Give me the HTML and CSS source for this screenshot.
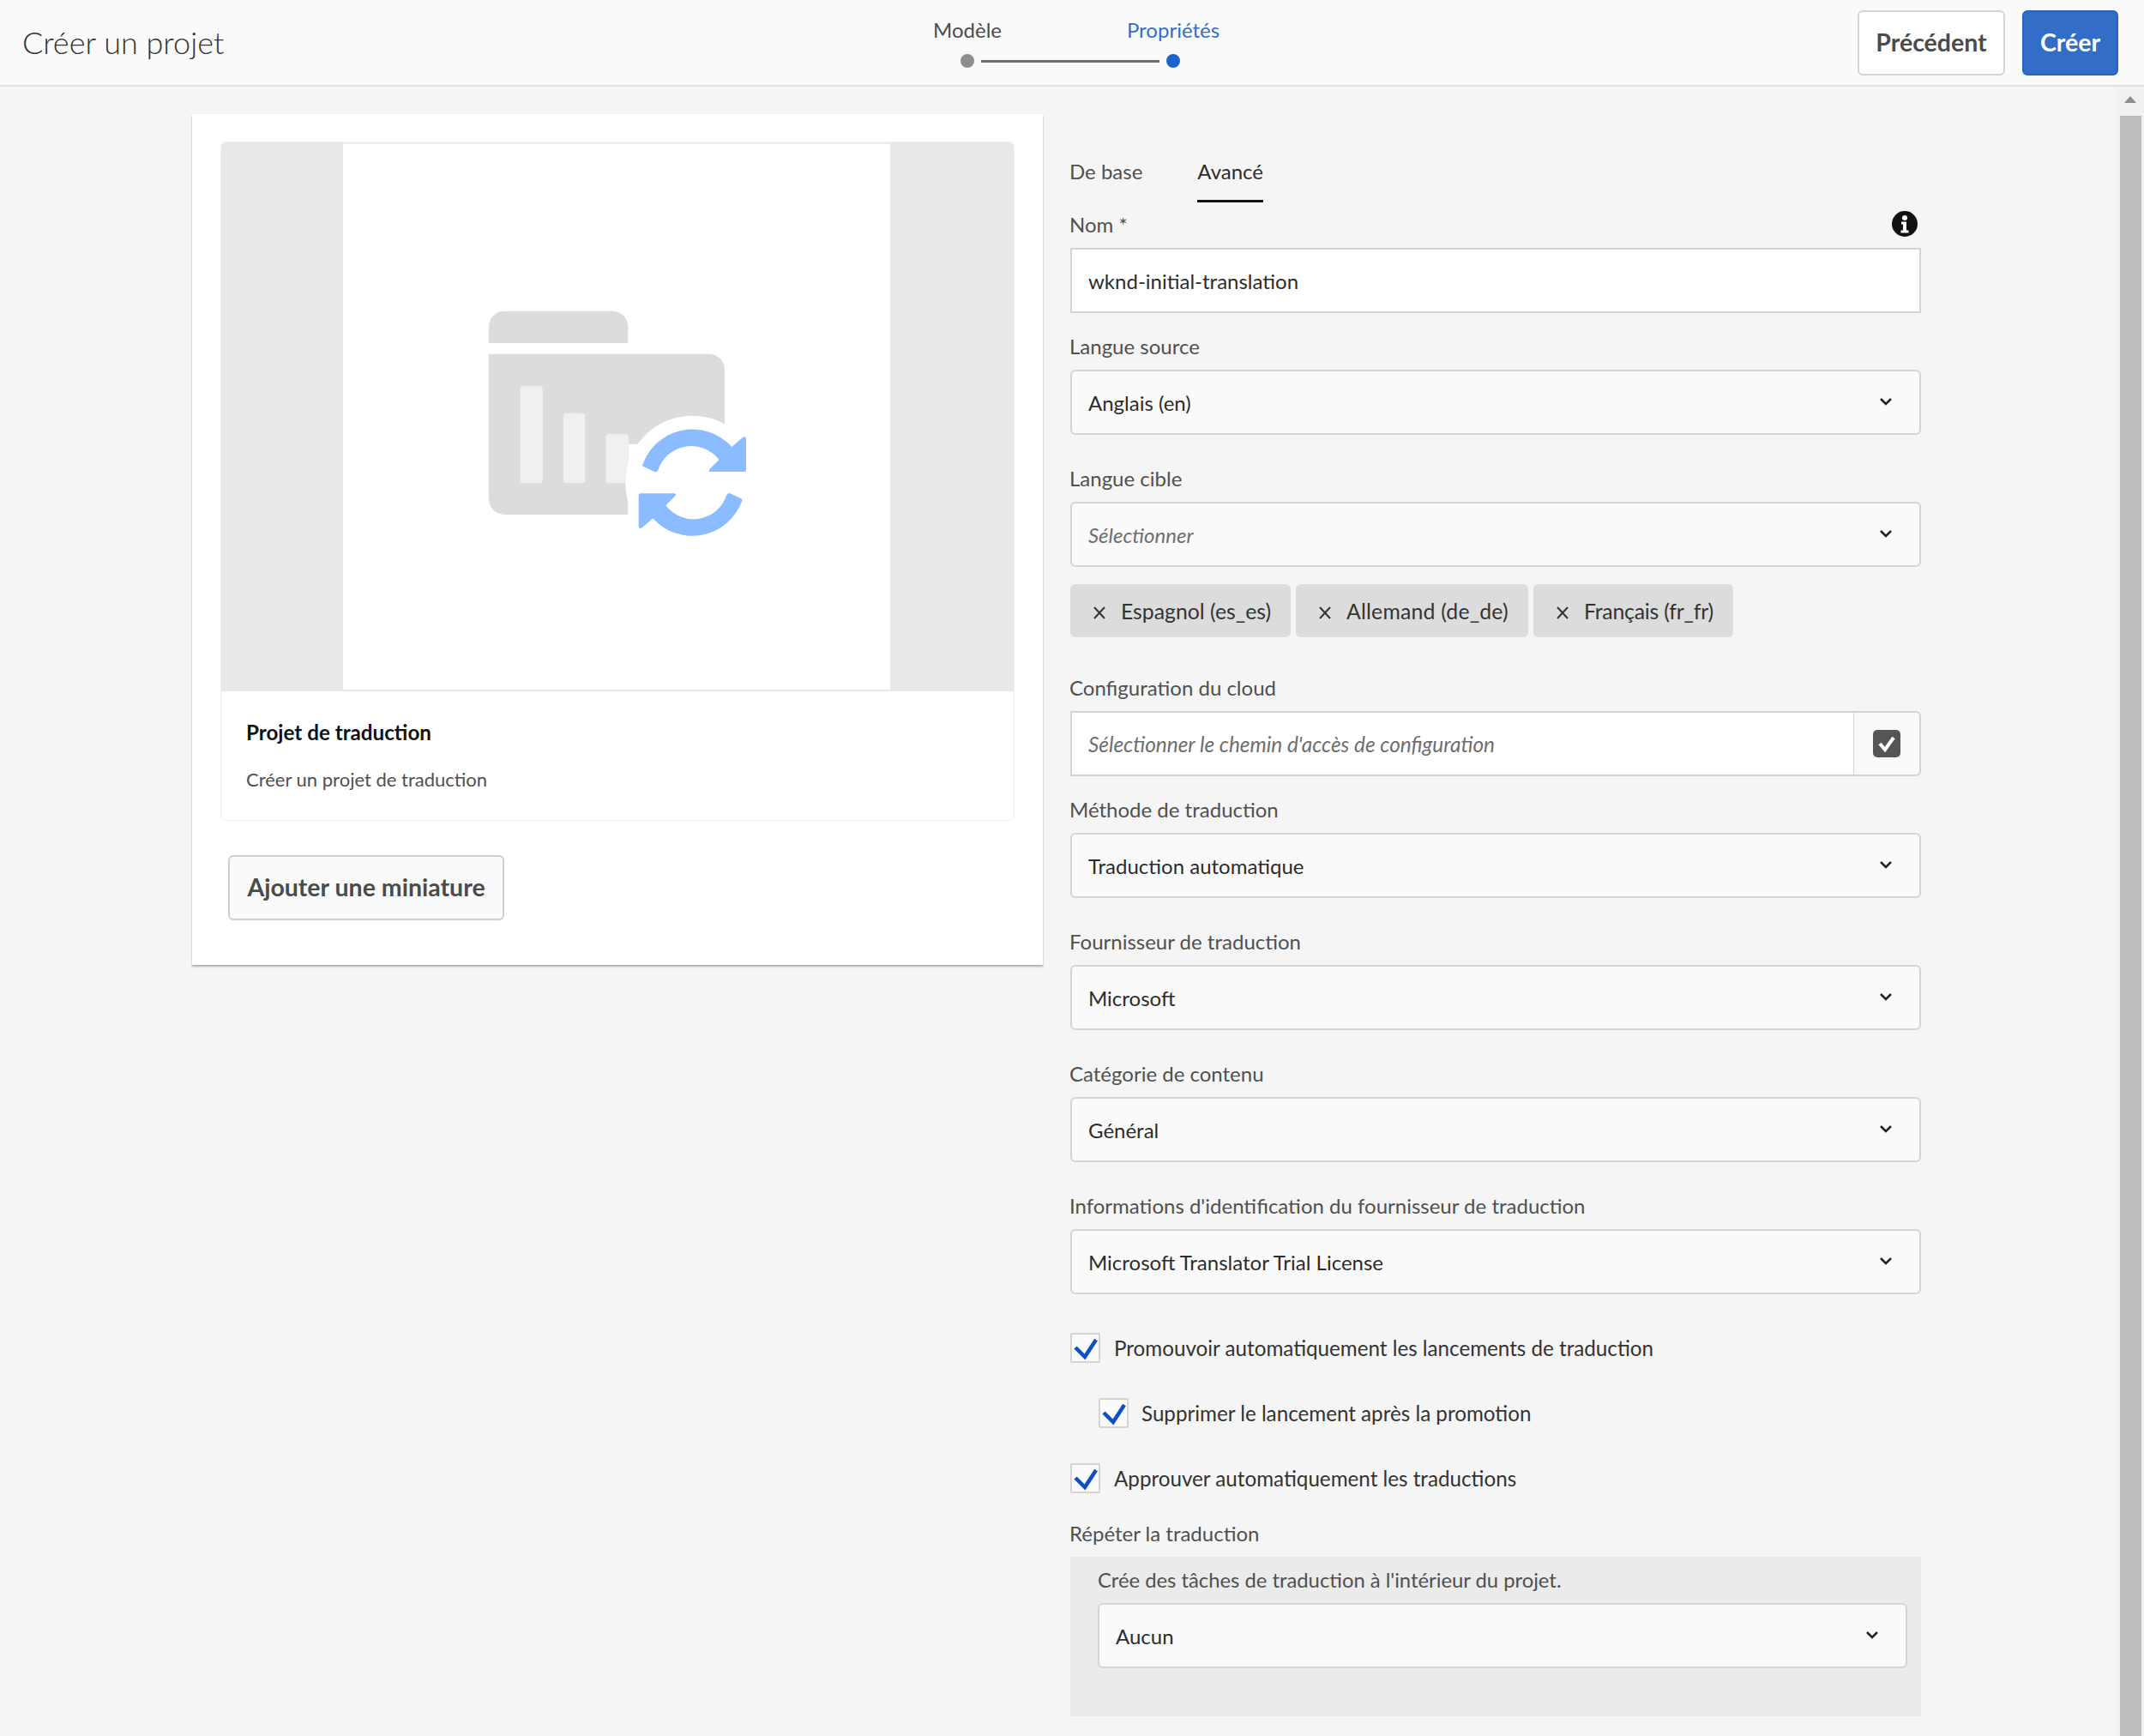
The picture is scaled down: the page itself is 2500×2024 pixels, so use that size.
FILE: index.html
```html
<!DOCTYPE html>
<html lang="fr">
<head>
<meta charset="utf-8">
<title>Créer un projet</title>
<link rel="stylesheet" href="styles.css">
</head>
<body>
<header class="topbar">
  <div class="page-title">Créer un projet</div>
  <div class="stepper">
    <div class="step"><span class="step-name">Modèle</span><span class="dot"></span></div>
    <span class="step-line"></span>
    <div class="step step-active"><span class="step-name">Propriétés</span><span class="dot"></span></div>
  </div>
  <div class="actions">
    <button class="btn btn-secondary">Précédent</button>
    <button class="btn btn-primary">Créer</button>
  </div>
</header>
<div class="body-row">
  <main class="content">
    <section class="card">
      <div class="tile">
        <div class="preview">
          <div class="preview-inner">
            <svg class="preview-icon" viewBox="0 0 1080 960" width="360" height="320">
              <g transform="translate(0 15)">
                <path d="M90 207V150a55 55 0 0 1 55-55H522a55 55 0 0 1 55 55V207Z" fill="#dcdcdc"/>
                <path d="M90 245H860a55 55 0 0 1 55 55V560H577V807H145a55 55 0 0 1-55-55Z" fill="#dcdcdc"/>
                <rect x="200" y="357" width="78" height="340" rx="10" fill="#f0f0f0"/>
                <rect x="351" y="452" width="76" height="245" rx="10" fill="#f0f0f0"/>
                <rect x="499" y="525" width="80" height="172" rx="10" fill="#f0f0f0"/>
                <circle cx="802" cy="695" r="234" fill="#fff"/>
                <path d="M628 632A185 185 0 0 1 940 570L978 537Q990 530 990 545V650Q990 657 983 657H865Q855 655 865 645L895 615A122 122 0 0 0 682 652Q678 660 670 657L633 640Q625 636 628 632Z" fill="#8abcff"/>
                <path d="M628 632A185 185 0 0 1 940 570L978 537Q990 530 990 545V650Q990 657 983 657H865Q855 655 865 645L895 615A122 122 0 0 0 682 652Q678 660 670 657L633 640Q625 636 628 632Z" fill="#8abcff" transform="rotate(180 802 695)"/>
              </g>
            </svg>
          </div>
        </div>
        <div class="tile-body">
          <div class="tile-title">Projet de traduction</div>
          <div class="tile-desc">Créer un projet de traduction</div>
        </div>
      </div>
      <button class="btn btn-thumb">Ajouter une miniature</button>
    </section>

    <form class="form">
      <div class="tabs">
        <span class="tab">De base</span>
        <span class="tab tab-active">Avancé</span>
      </div>

      <div class="field">
        <div class="label label-row"><span>Nom *</span>
          <svg class="info" viewBox="0 0 30 30" width="30" height="30"><circle cx="15" cy="15" r="15" fill="#111"/><circle cx="15" cy="8" r="3" fill="#fff"/><path d="M11 12.500h6v10h2.500v3h-9v-3H13v-7h-2Z" fill="#fff"/></svg>
        </div>
        <div class="input">wknd-initial-translation</div>
      </div>

      <div class="field field-select">
        <div class="label">Langue source</div>
        <div class="select"><span>Anglais (en)</span><svg class="chev" viewBox="0 0 16 10" width="16" height="10"><path d="M2 2l6 6 6-6" fill="none" stroke="#222" stroke-width="2.500"/></svg></div>
      </div>

      <div class="field field-target">
        <div class="label">Langue cible</div>
        <div class="select placeholder"><span>Sélectionner</span><svg class="chev" viewBox="0 0 16 10" width="16" height="10"><path d="M2 2l6 6 6-6" fill="none" stroke="#222" stroke-width="2.500"/></svg></div>
        <div class="tags">
          <span class="tag"><svg class="x" viewBox="0 0 18 18" width="18" height="18"><path d="M3 3l12 13M15 3L3 16" stroke="#333" stroke-width="2"/></svg>Espagnol (es_es)</span>
          <span class="tag tag-wide"><svg class="x" viewBox="0 0 18 18" width="18" height="18"><path d="M3 3l12 13M15 3L3 16" stroke="#333" stroke-width="2"/></svg>Allemand (de_de)</span>
          <span class="tag tag-narrow"><svg class="x" viewBox="0 0 18 18" width="18" height="18"><path d="M3 3l12 13M15 3L3 16" stroke="#333" stroke-width="2"/></svg>Français (fr_fr)</span>
        </div>
      </div>

      <div class="field">
        <div class="label">Configuration du cloud</div>
        <div class="path-input">
          <div class="path-text">Sélectionner le chemin d'accès de configuration</div>
          <div class="path-btn"><svg viewBox="0 0 32 32" width="32" height="32"><rect width="32" height="32" rx="5" fill="#555"/><path d="M8 16l6 7L24 9" fill="none" stroke="#fff" stroke-width="4"/></svg></div>
        </div>
      </div>

      <div class="field field-select">
        <div class="label">Méthode de traduction</div>
        <div class="select"><span>Traduction automatique</span><svg class="chev" viewBox="0 0 16 10" width="16" height="10"><path d="M2 2l6 6 6-6" fill="none" stroke="#222" stroke-width="2.500"/></svg></div>
      </div>
      <div class="field field-select">
        <div class="label">Fournisseur de traduction</div>
        <div class="select"><span>Microsoft</span><svg class="chev" viewBox="0 0 16 10" width="16" height="10"><path d="M2 2l6 6 6-6" fill="none" stroke="#222" stroke-width="2.500"/></svg></div>
      </div>
      <div class="field field-select">
        <div class="label">Catégorie de contenu</div>
        <div class="select"><span>Général</span><svg class="chev" viewBox="0 0 16 10" width="16" height="10"><path d="M2 2l6 6 6-6" fill="none" stroke="#222" stroke-width="2.500"/></svg></div>
      </div>
      <div class="field field-last">
        <div class="label">Informations d'identification du fournisseur de traduction</div>
        <div class="select"><span>Microsoft Translator Trial License</span><svg class="chev" viewBox="0 0 16 10" width="16" height="10"><path d="M2 2l6 6 6-6" fill="none" stroke="#222" stroke-width="2.500"/></svg></div>
      </div>

      <div class="checks">
        <div class="check"><span class="box"><svg viewBox="0 0 35 35" width="35" height="35"><path d="M6 17l11 11L30 8" fill="none" stroke="#0d4fc4" stroke-width="4.500"/></svg></span>Promouvoir automatiquement les lancements de traduction</div>
        <div class="check check-sub"><span class="box"><svg viewBox="0 0 35 35" width="35" height="35"><path d="M6 17l11 11L30 8" fill="none" stroke="#0d4fc4" stroke-width="4.500"/></svg></span>Supprimer le lancement après la promotion</div>
        <div class="check"><span class="box"><svg viewBox="0 0 35 35" width="35" height="35"><path d="M6 17l11 11L30 8" fill="none" stroke="#0d4fc4" stroke-width="4.500"/></svg></span>Approuver automatiquement les traductions</div>
      </div>

      <div class="label">Répéter la traduction</div>
      <div class="repeat">
        <div class="repeat-hint">Crée des tâches de traduction à l'intérieur du projet.</div>
        <div class="select"><span>Aucun</span><svg class="chev" viewBox="0 0 16 10" width="16" height="10"><path d="M2 2l6 6 6-6" fill="none" stroke="#222" stroke-width="2.500"/></svg></div>
      </div>
    </form>
  </main>
  <aside class="scrollbar">
    <span class="scroll-arrow"></span>
    <span class="scroll-thumb"></span>
  </aside>
</div>
</body>
</html>
```
FILE: styles.css
```css
* { box-sizing: border-box; }
html, body { margin: 0; padding: 0; }
body {
  width: 2500px;
  height: 2024px;
  overflow: hidden;
  background: #f5f5f5;
  font-family: "Lato", "Noto Sans", sans-serif;
  font-size: 24px;
  color: #2c2c2c;
  display: flex;
  flex-direction: column;
}

/* Top bar */
.topbar {
  height: 101px;
  flex: none;
  display: grid;
  grid-template-columns: 1fr auto 1fr;
  align-items: center;
  background: #fafafa;
  border-bottom: 2px solid #e1e1e1;
  padding: 0 30px 0 26px;
}
.page-title { font-size: 36px; font-weight: 300; color: #333; padding-bottom: 2px; }
.stepper { display: flex; align-items: flex-end; height: 100%; padding-bottom: 20px; margin-left: 0; }
.step { display: flex; flex-direction: column; align-items: center; width: 120px; gap: 14px; color: #4b4b4b; }
.step-name { line-height: 28px; }
.dot { width: 16px; height: 16px; border-radius: 50%; background: #8e8e8e; }
.step-active { color: #326ec8; }
.step-active .dot { background: #1f62cc; }
.step-line { width: 208px; height: 3px; background: #6e6e6e; margin: 0 -44px 6px; }
.actions { display: flex; justify-content: flex-end; gap: 20px; }
.btn {
  font-family: inherit;
  font-size: 28.500px;
  font-weight: 700;
  height: 76px;
  border-radius: 6px;
  cursor: pointer;
  padding: 0 0 2px;
}
.btn-secondary { width: 172px; background: #fff; border: 2px solid #d4d4d4; color: #4b4b4b; }
.btn-primary { width: 112px; background: #326ec8; border: 2px solid #2464c4; color: #fff; }

/* Main */
.body-row { flex: 1; display: flex; min-height: 0; }
.content {
  flex: 1;
  display: flex;
  align-items: flex-start;
  gap: 31px;
  padding: 32px 0 0 224px;
}

/* Card */
.card {
  width: 992px;
  flex: none;
  height: 992px;
  background: #fff;
  box-shadow: 0 2px 2px rgba(0,0,0,.3);
  padding: 32px 33px;
}
.tile {
  width: 926px;
  border-radius: 6px;
  border: 1px solid #efefef;
  overflow: hidden;
}
.preview { height: 640px; background: #e8e8e8; padding: 0 144px 0 142px; }
.preview-inner {
  height: 100%;
  background: #fff;
  border-top: 2px solid #eee;
  border-bottom: 2px solid #e6e6e6;
  display: flex;
  align-items: center;
  justify-content: center;
}
.preview-icon { margin-left: 2px; }
.tile-body { height: 150px; padding: 34px 29px; }
.tile-title { font-weight: 700; color: #111; line-height: 28px; font-size: 24.200px; }
.tile-desc { margin-top: 27px; color: #505050; font-size: 22px; line-height: 28px; }
.btn-thumb {
  display: block;
  margin: 40px 0 0 9px;
  width: 322px;
  background: #fafafa;
  border: 2px solid #cfcfcf;
  color: #4b4b4b;
}

/* Form */
.form { width: 993px; flex: none; }
.tabs { display: flex; gap: 64px; margin-top: 50px; height: 53px; margin-bottom: 12px; }
.tab { color: #505050; height: 53px; line-height: 34px; }
.tab-active { color: #2c2c2c; border-bottom: 3px solid #111; }
.label { color: #505050; line-height: 28px; height: 28px; margin-bottom: 13px; }
.label-row { display: flex; justify-content: space-between; align-items: center; padding-right: 4px; }
.info { margin-top: -2px; }
.field { margin-bottom: 25px; }
.field .select, .field .input, .field .tags, .field .path-input { margin-left: 1px; }
.field-select { margin-bottom: 37px; }
.field-last, .field-target { margin-bottom: 45px; }
.input {
  height: 76px;
  background: #fff;
  border: 2px solid #d4d4d4;
  padding: 2px 19px 0;
  line-height: 70px;
}
.select {
  height: 76px;
  background: #fafafa;
  border: 2px solid #d4d4d4;
  border-radius: 6px;
  padding: 0 31px 0 19px;
  display: flex;
  align-items: center;
  justify-content: space-between;
}
.placeholder { font-style: italic; color: #6e6e6e; }
.chev { flex: none; margin-top: -2px; }

.tags { display: flex; gap: 6px; margin-top: 20px; }
.tag {
  height: 62px;
  display: flex;
  align-items: center;
  background: #dcdcdc;
  border-radius: 6px;
  padding: 0 23px 0 25px;
  color: #333;
  font-size: 24.800px;
}
.tag-wide { letter-spacing: .2px; }
.tag-narrow { letter-spacing: -.2px; }
.x { margin-right: 16px; flex: none; margin-top: 3px; }

.path-input { display: flex; height: 76px; }
.path-text {
  flex: 1;
  background: #fff;
  border: 2px solid #d4d4d4;
  border-right: 1px solid #d4d4d4;
  padding: 2px 19px 0;
  line-height: 70px;
  font-size: 24.400px;
  font-style: italic;
  color: #6e6e6e;
}
.path-btn {
  width: 78px;
  background: #fafafa;
  border: 2px solid #d4d4d4;
  border-left: 0;
  border-radius: 0 6px 6px 0;
  display: flex;
  align-items: center;
  justify-content: center;
}

/* Checkboxes */
.checks { display: flex; flex-direction: column; gap: 41px; margin-bottom: 33px; }
.check { display: flex; align-items: center; height: 35px; color: #333; padding-left: 1px; gap: 16px; font-size: 24.200px; }
.check-sub { padding-left: 34px; gap: 15px; }
.box { width: 35px; height: 35px; flex: none; background: #fafafa; border: 2px solid #d4d4d4; border-radius: 2px; position: relative; }
.box svg { position: absolute; left: -2px; top: -2px; }

/* Repeat */
.repeat { height: 186px; background: #ebebeb; padding: 12px 16px 0 32px; margin-left: 1px; }
.repeat-hint { color: #505050; line-height: 30px; margin-bottom: 12px; font-size: 23.800px; }

/* Scrollbar */
.scrollbar { width: 32px; flex: none; background: #f1f1f1; position: relative; display: flex; flex-direction: column; align-items: center; padding-top: 11px; }
.scroll-arrow { width: 0; height: 0; border-left: 7px solid transparent; border-right: 7px solid transparent; border-bottom: 8px solid #8e8e8e; }
.scroll-thumb { width: 25px; flex: 1; background: #bdbdbd; margin-top: 15px; }
```
